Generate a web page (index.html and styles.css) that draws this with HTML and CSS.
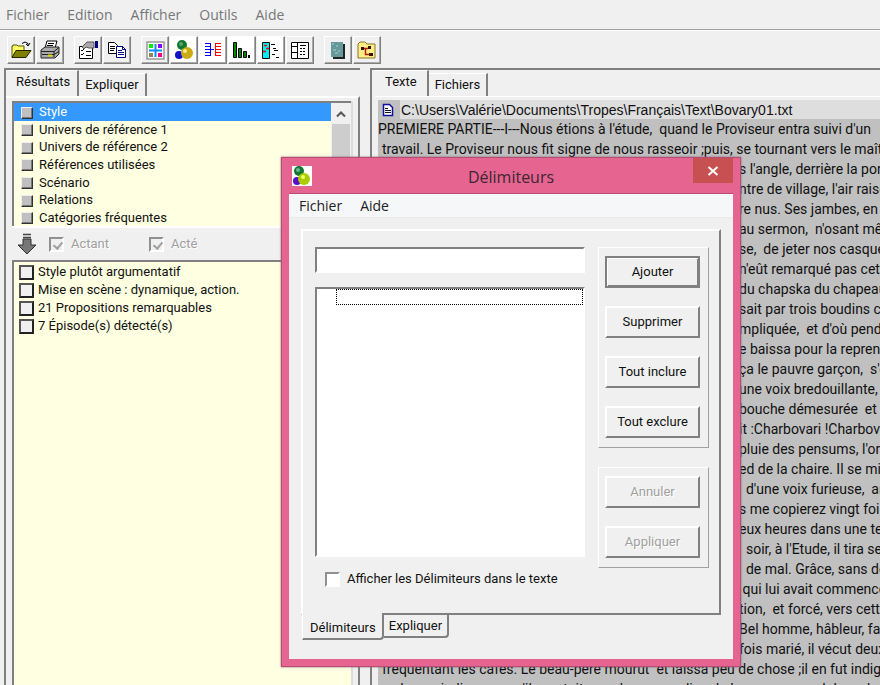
FILE: index.html
```html
<!DOCTYPE html>
<html lang="fr">
<head>
<meta charset="utf-8">
<title>Tropes</title>
<link rel="stylesheet" href="styles.css">
</head>
<body>
<div class="app">
  <nav class="menubar">
    <a href="#">Fichier</a><a href="#">Edition</a><a href="#">Afficher</a><a href="#">Outils</a><a href="#">Aide</a>
  </nav>
  <div class="toolbar">
    <div class="tools">
      <button aria-label="Ouvrir"><svg viewBox="0 0 22 22"><path d="M2 18V7h1V6h4l1 1h6v4" fill="#ffff66" stroke="#555500"/><path d="M2 18.500l4-7h15l-5 7z" fill="#808000" stroke="#222200"/><path d="M12 4.500q3-3 6 0v2M16 5l2 2 2-3" fill="none" stroke="#000"/></svg></button>
      <button aria-label="Imprimer"><svg viewBox="0 0 22 22"><path d="M6 9l2-7h10l-2 7z" fill="#fff" stroke="#000"/><path d="M9 4.500h6M8 6.500h6" stroke="#000"/><path d="M2 11l4-3h14v7l-4 4H2z" fill="#aaa" stroke="#222"/><path d="M2 12.500h13l5-4M15 12v6M3 15.500h12l5-3" fill="none" stroke="#222"/><path d="M9 16.500h4" stroke="#dd0" stroke-width="2"/></svg></button>
    </div>
    <div class="tools">
      <button aria-label="Propriétés"><svg viewBox="0 0 22 22"><path d="M2.500 7.500h13v12h-13z" fill="#fff" stroke="#000"/><path d="M4 11l1 1 2-2M4 15l1 1 2-2M9 12.500h5M9 16.500h5" fill="none" stroke="#000"/><path d="M5 8l5-5h7v6h-5l-3-1-2 2z" fill="#aaa" stroke="#555"/><path d="M18 2h3v7h-3z" fill="#000080"/></svg></button>
      <button aria-label="Copier"><svg viewBox="0 0 22 22"><path d="M2.500 3.500h6l3 3v8h-9z" fill="#fff" stroke="#000"/><path d="M4 7.500h5M4 9.500h5M4 11.500h4" stroke="#000"/><path d="M10.500 7.500h6l3 3v8h-9z" fill="#fff" stroke="#000080"/><path d="M16.500 7v3.500H20M12 11.500h4M12 13.500h6M12 15.500h6" fill="none" stroke="#000080"/></svg></button>
    </div>
    <div class="tools">
      <button aria-label="Univers"><svg viewBox="0 0 22 22"><path d="M3 3h17v17H3z" fill="#fff" stroke="#999" stroke-width="1.500"/><path d="M5 5h4v4H5z" fill="#0e0"/><path d="M14 5h4v4h-4z" fill="#80f"/><path d="M5 14h4v4H5z" fill="#885"/><path d="M14 14h4v4h-4z" fill="#f08"/><path d="M11.500 5v13M5 11.500h13" stroke="#18f" stroke-width="2"/></svg></button>
      <button class="lit" aria-label="Sphères"><svg viewBox="0 0 22 22"><circle cx="6" cy="16" r="4" fill="#11c"/><circle cx="9" cy="6" r="5" fill="#173"/><circle cx="8" cy="5" r="2" fill="#5a6"/><circle cx="14" cy="14" r="6" fill="#ca1"/><circle cx="12" cy="12" r="2" fill="#fe8"/></svg></button>
      <button class="lit" aria-label="Relations"><svg viewBox="0 0 22 22"><path d="M3 4.500h6M3 7.500h6M3 10.500h6M3 13.500h6M3 16.500h6M8.500 4v13M9 10.500h3" fill="none" stroke="#00f"/><path d="M13 4.500h6M13 7.500h6M13 10.500h6M13 13.500h6M13 16.500h6M13.500 4v13" fill="none" stroke="#f00"/></svg></button>
      <button class="lit" aria-label="Histogramme"><svg viewBox="0 0 22 22"><path d="M2.500 3.500h3v15h-3zM7.500 9.500h3v9h-3zM12.500 12.500h3v6h-3z" fill="#080" stroke="#000"/><path d="M17 16h2v3h-2z"/></svg></button>
      <button class="lit" aria-label="Épisodes"><svg viewBox="0 0 22 22"><path d="M2.500 3.500h7v16h-7z" fill="#0ee" stroke="#000"/><path d="M4 6.500h3M6 9.500h3M3 12.500h3" stroke="#f00" stroke-width="1.500"/><path d="M11 5.500h4M13 9.500h3M14 11.500h4M12 15.500h3M16 18.500h3" stroke="#000"/></svg></button>
      <button aria-label="Tableau"><svg viewBox="0 0 22 22"><path d="M2.500 3.500h17v16h-17z" fill="#fff" stroke="#000"/><path d="M2 7.500h7M8.500 3v17M2 13.500h7" stroke="#000"/><path d="M11 6.500h6" stroke="#000"/><path d="M11 9.500h6M11 12.500h6M11 15.500h6" stroke="#000" stroke-dasharray="2 1"/></svg></button>
    </div>
    <div class="tools">
      <button aria-label="Livre"><svg viewBox="0 0 22 22"><path d="M6 5h12v15H6z" fill="#222"/><path d="M4 3h12v15H4z" fill="#699"/><path d="M5 5h2M9 7h2M6 11h3M11 12h2M8 14h3" stroke="#acc"/></svg></button>
      <button aria-label="Scénario"><svg viewBox="0 0 22 22"><path d="M2 19V5l2-2h5l2 2h8v14z" fill="#ffee88" stroke="#887722"/><path d="M5 8h3v3H5zM12 7h3v3h-3zM13 14h4v3h-4z" fill="#310"/><path d="M8 9.500h4M9.500 9v6.500h4" fill="none" stroke="#a20" stroke-width="1.500"/></svg></button>
    </div>
  </div>
  <main class="workspace">
    <section class="pane results">
      <div class="tabs"><button class="tab active">Résultats</button><button class="tab">Expliquer</button></div>
      <div class="page">
        <div class="frame">
          <div class="toplist">
            <ul class="categories">
              <li class="selected"><i></i>Style</li><li><i></i>Univers de référence 1</li><li><i></i>Univers de référence 2</li><li><i></i>Références utilisées</li><li><i></i>Scénario</li><li><i></i>Relations</li><li><i></i>Catégories fréquentes</li>
            </ul>
            <div class="scroll"><svg viewBox="0 0 20 20"><path d="M6 13l4-4 4 4" fill="none" stroke="#555" stroke-width="2"/></svg><div class="thumb"></div></div>
          </div>
          <div class="filter">
            <svg class="arrow" viewBox="0 0 20 22"><path d="M6 1.500h8M6 4.500h8" stroke="#444" stroke-width="1.500"/><path d="M6 6h8v6h5l-9 9-9-9h5z" fill="#777" stroke="#333"/></svg>
            <label><input type="checkbox" checked disabled>Actant</label>
            <label><input type="checkbox" checked disabled>Acté</label>
          </div>
          <ul class="findings">
            <li><i></i>Style plutôt argumentatif</li><li><i></i>Mise en scène : dynamique, action.</li><li><i></i>21 Propositions remarquables</li><li><i></i>7 Épisode(s) détecté(s)</li>
          </ul>
        </div>
      </div>
    </section>
    <section class="pane document">
      <div class="tabs"><button class="tab active">Texte</button><button class="tab">Fichiers</button></div>
      <div class="doc">
        <div class="path"><span class="docicon"><svg viewBox="0 0 14 14"><path d="M2.500 1.500h6l3 3v8h-9z" fill="#fff" stroke="#1010a0" stroke-width="1.500"/><path d="M4 5.500h3M4 7.500h6M4 9.500h6" stroke="#111"/></svg></span><span class="name">C:\Users\Valérie\Documents\Tropes\Français\Text\Bovary01.txt</span></div>
        <div class="text">
          <p class="first">PREMIERE PARTIE---I---Nous étions à l'étude,&nbsp; quand le Proviseur entra suivi d'un</p>
          <p>travail. Le Proviseur nous fit signe de nous rasseoir ;puis, se tournant vers le maître</p>
          <div class="beside">
            <p>s l'angle, derrière la porte</p><p>ntre de village, l'air raison</p><p>re nus. Ses jambes, en</p><p>au sermon,&nbsp; n'osant mêm</p><p>se,&nbsp; de jeter nos casquet</p><p>n'eût remarqué pas cette</p><p>du chapska du chapeau</p><p>sait par trois boudins circu</p><p>mpliquée,&nbsp; et d'où penda</p><p>e baissa pour la reprendre</p><p>ça le pauvre garçon,&nbsp; s'é</p><p>une voix bredouillante,&nbsp; u</p><p>bouche démesurée&nbsp; et la</p><p>it :Charbovari !Charbova</p><p>pluie des pensums, l'ordr</p><p>ed de la chaire. Il se mit</p><p>&nbsp; d'une voix furieuse,&nbsp; ar</p><p>s me copierez vingt fois l</p><p>eux heures dans une ten</p><p>&nbsp; soir, à l'Etude, il tira ses</p><p>&nbsp; de mal. Grâce, sans do</p><p>&nbsp;qui lui avait commencé</p><p>tion,&nbsp; et forcé, vers cette</p><p>Bel homme, hâbleur, fais</p><p>fois marié, il vécut deux</p>
          </div>
          <p>fréquentant les cafés. Le beau-père mourut&nbsp; et laissa peu de chose ;il en fut indigné</p>
          <p>&nbsp;&nbsp; plus en indiennes, qu'il montait ses chevaux au lieu de les envoyer au labour, buvait</p>
        </div>
      </div>
    </section>
  </main>
</div>
<div class="dialog" role="dialog" aria-labelledby="dlg">
  <header class="titlebar">
    <svg class="logo" viewBox="0 0 20 20"><path d="M0 0h20v20H0z" fill="#fff"/><circle cx="5" cy="15" r="4" fill="#51c"/><circle cx="7" cy="5" r="5" fill="#173"/><circle cx="6" cy="4" r="2" fill="#6b8"/><circle cx="12" cy="13" r="6" fill="#ac0"/><circle cx="11" cy="11" r="2" fill="#ef6"/></svg>
    <h1 id="dlg">Délimiteurs</h1>
    <button class="close" aria-label="Fermer"><svg viewBox="0 0 12 12"><path d="M1.500 2l9 8M10.500 2l-9 8" stroke="#fff" stroke-width="2"/></svg></button>
  </header>
  <div class="client">
    <nav class="dlgmenu"><a href="#">Fichier</a><a href="#">Aide</a></nav>
    <div class="body">
      <div class="sheet">
        <div class="fields">
          <input class="entry" type="text" aria-label="Délimiteur">
          <div class="listbox"><div class="focus"></div></div>
          <label class="show"><input type="checkbox">Afficher les Délimiteurs dans le texte</label>
        </div>
        <div class="actions">
          <div class="group"><button class="default">Ajouter</button><button>Supprimer</button><button>Tout inclure</button><button>Tout exclure</button></div>
          <div class="group"><button disabled>Annuler</button><button disabled>Appliquer</button></div>
        </div>
      </div>
      <div class="bottomtabs"><button class="on">Délimiteurs</button><button>Expliquer</button></div>
    </div>
  </div>
</div>
</body>
</html>
```
FILE: styles.css
```css
* { box-sizing: border-box; }
body { margin: 0; height: 100vh; overflow: hidden; background: #f0f0f0; color: #111; font: 13px/20px Roboto, "Liberation Sans", sans-serif; }
button { font: inherit; color: inherit; background: none; border: 0; padding: 0; }
ul, p, h1 { margin: 0; padding: 0; list-style: none; font-weight: normal; }
a { color: inherit; text-decoration: none; }
svg { display: block; }

.app { height: 100vh; display: flex; flex-direction: column; }
.menubar { display: flex; gap: 18px; height: 30px; padding: 5px 6px; border-bottom: 1px solid #a0a0a0; font-size: 14px; font-family: "Open Sans", sans-serif; color: #777; }
.toolbar { display: flex; gap: 10px; height: 38px; padding: 5px 7px 0; border-top: 1px solid #fff; }
.tools { display: flex; gap: 1px; }
.tools button { width: 28px; height: 28px; padding: 2px; border: 1px solid; border-color: #fff #808080 #808080 #fff; box-shadow: inset -1px -1px #a8a8a8; }
.tools .lit { background: #fff; }
.tools svg { width: 22px; height: 22px; }

.workspace { flex: 1; min-height: 0; display: flex; gap: 10px; padding-left: 4px; }
.pane { border-top: 2px solid #808080; border-left: 2px solid #808080; display: flex; flex-direction: column; min-width: 0; }
.results { flex: 0 0 356px; }
.document { flex: 1; }
.tabs { flex: none; display: flex; align-items: flex-end; height: 26px; padding-left: 3px; }
.tab { height: 23px; padding: 0 6px; border-right: 2px solid #808080; border-top: 1px solid #fff; }
.tab.active { height: 26px; padding: 0 7px 4px; }
.document .tab.active { padding: 0 10px 4px; }
.page { flex: 1; min-height: 0; display: flex; padding: 3px 5px 0 6px; border-top: 2px solid #fff; border-right: 2px solid #808080; }
.frame { flex: 1; display: flex; flex-direction: column; border-right: 2px solid #ddd; }
.toplist { display: flex; height: 125px; border-top: 2px solid #808080; border-left: 2px solid #808080; background: #ffffe1; line-height: 17px; }
.categories { flex: 1; display: grid; grid-auto-rows: 1fr; }
.categories li { display: flex; align-items: center; gap: 6px; padding-left: 7px; }
.categories i { width: 12px; height: 12px; margin-top: 2px; background: #c0c0c0; border: 1px solid; border-color: #eee #333 #333 #eee; box-shadow: inset -1px -1px #777; }
.selected { background: #3399ff; color: #fff; }
.scroll { width: 20px; background: #f0f0f0; }
.scroll svg { width: 20px; height: 21px; }
.thumb { height: 60px; margin: 0 1px; background: #cdcdcd; }
.filter { display: flex; align-items: center; height: 34px; padding-left: 5px; border-top: 2px solid #fff; color: #a0a0a0; text-shadow: 1px 1px #fff; }
.arrow { width: 20px; height: 22px; margin-right: 12px; }
.filter label { display: flex; align-items: center; gap: 7px; width: 100px; }
input[type=checkbox] { appearance: none; flex: none; width: 15px; height: 15px; margin: 0; border: 2px solid; border-color: #909090 #fff #fff #909090; background: #fff; }
.filter input { background: #f0f0f0; }
.filter input::after { content: ""; display: block; width: 4px; height: 7px; margin: 1px 4px; border: solid #a0a0a0; border-width: 0 2px 2px 0; transform: rotate(40deg); }
.findings { flex: 1; padding-top: 1px; border-top: 2px solid #808080; border-left: 2px solid #808080; background: #ffffe1; }
.findings li { display: flex; align-items: center; gap: 4px; height: 18px; padding-left: 5px; }
.findings i { width: 15px; height: 15px; border: 2px solid; border-color: #555 #222 #222 #555; background: #f0f0f0; }

.doc { flex: 1; min-height: 0; margin-left: 3px; padding: 3px 0 0 3px; border-top: 1px solid #fff; display: flex; flex-direction: column; font-size: 14px; }
.path { display: flex; height: 19px; background: #dedede; white-space: nowrap; font-family: "Liberation Sans", sans-serif; }
.docicon { width: 22px; padding: 3px; background: #c0c0c0; }
.docicon svg { width: 14px; height: 14px; }
.name { padding-left: 1px; }
.text { flex: 1; min-height: 0; padding-left: 4px; background: #c0c0c0; overflow: hidden; white-space: nowrap; }
.text p { height: 20px; }
.first { margin-left: -4px; }
.beside { padding-left: 357px; }

.dialog { position: absolute; left: 281px; top: 157px; width: 460px; border: 1px solid #b84c74; background: #e66590; padding: 0 7px 7px; box-shadow: 0 0 2px #806070; }
.titlebar { display: flex; align-items: center; height: 35px; padding-left: 3px; }
.logo { width: 20px; height: 20px; }
.titlebar h1 { flex: 1; text-align: center; font: 16px/24px "Open Sans", sans-serif; color: #3c2630; padding: 2px 0 0 17px; }
.close { align-self: flex-start; width: 40px; height: 25px; background: #c75050; display: grid; place-items: center; }
.close svg { width: 12px; height: 12px; }
.client { background: #f0f0f0; border: 1px solid #b84c74; border-width: 1px 0 0; }
.dlgmenu { display: flex; gap: 18px; height: 24px; padding: 2px 10px; background: #f5f7f9; border-bottom: 1px solid #e8ebee; font-size: 14px; font-family: "Open Sans", sans-serif; color: #222; }
.body { padding: 11px 12px 19px; }
.sheet { display: flex; gap: 13px; padding: 16px 10px 0 12px; height: 386px; border: 2px solid; border-color: #fff #808080 #808080 #fff; }
.fields { flex: 1; }
.entry { display: block; width: 100%; height: 26px; border: 2px solid; border-color: #808080 #fff #fff #808080; background: #fff; }
.listbox { height: 270px; margin-top: 14px; padding: 0 0 0 19px; border: 2px solid; border-color: #808080 #fff #fff #808080; background: #fff; }
.focus { height: 16px; border: 1px dotted #000; }
.show { display: flex; align-items: center; gap: 7px; padding: 12px 0 0 10px; }
.actions { display: flex; flex-direction: column; gap: 19px; }
.group { display: grid; gap: 18px; padding: 8px 8px 9px 6px; border: 1px solid; border-color: #fff #a0a0a0 #a0a0a0 #fff; }
.group button { width: 95px; height: 32px; border: 2px solid; border-color: #fff #808080 #808080 #fff; }
.group .default { border-color: #808080; box-shadow: inset 1px 1px #fff, inset -1px -1px #808080; }
.group button:disabled { color: #a0a0a0; text-shadow: 1px 1px #fff; }
.bottomtabs { display: flex; align-items: flex-start; margin-left: 1px; }
.bottomtabs button { height: 23px; padding: 0 5px; border: solid #808080; border-width: 0 2px 2px 0; border-radius: 0 0 4px 0; }
.bottomtabs .on { height: 27px; margin-top: -2px; padding: 5px 6px 0 7px; background: #f0f0f0; border-left: 1px solid #fff; }
```
